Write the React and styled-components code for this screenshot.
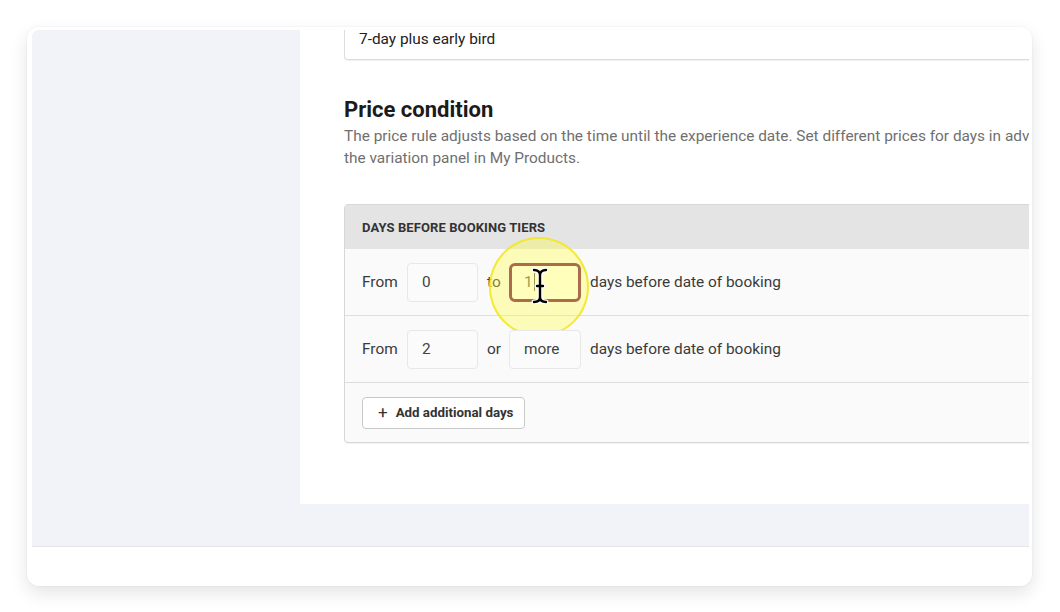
import React from "react";
import styled, { createGlobalStyle } from "styled-components";

const Global = createGlobalStyle`
  html, body { margin: 0; padding: 0; background: #ffffff; }
  body { font-family: Roboto, "Noto Sans", Arial, sans-serif; -webkit-font-smoothing: antialiased; }
  * { box-sizing: border-box; }
`;

const Page = styled.div`
  width: 1060px;
  height: 612px;
  padding: 27px 0 0 27px;
  overflow: hidden;
`;

const Card = styled.div`
  width: 1005px;
  height: 559px;
  background: #fff;
  border-radius: 12px;
  box-shadow: 0 0 0 1px rgba(0,0,0,0.02), 0 7px 18px rgba(0,0,0,0.11);
  padding: 3px 3px 0 5px;
  display: flex;
  flex-direction: column;
`;

const Screen = styled.div`
  height: 517px;
  display: flex;
  flex-direction: column;
  background: #f2f3f8;
  border-top-left-radius: 7px;
  border-bottom: 1px solid #e4e4e9;
  overflow: hidden;
`;

const MainRow = styled.div`
  height: 474px;
  display: flex;
`;

const Sidebar = styled.aside`
  width: 268px;
  flex: none;
  background: #f2f3f8;
`;

const Content = styled.main`
  flex: 1;
  background: #fff;
  overflow: hidden;
  padding-left: 44px;
`;

const Inner = styled.div`
  width: 820px;
  margin-top: -11px;
`;

const TextInput = styled.div`
  height: 41px;
  border: 1px solid #dcdcdc;
  border-top: none;
  border-radius: 0 0 4px 4px;
  box-shadow: 0 1px 1px rgba(0,0,0,0.06);
  padding-left: 14px;
  display: flex;
  align-items: center;
  font-size: 15.4px;
  color: #222;
`;

const Heading = styled.h2`
  margin: 36px 0 0;
  font-size: 22px;
  line-height: 28px;
  font-weight: 700;
  color: #1b1b1b;
`;

const Desc = styled.p`
  margin: 2px 0 0;
  font-size: 15.4px;
  line-height: 21.5px;
  color: #6f6f6f;
  white-space: nowrap;
`;

const Table = styled.div`
  margin-top: 35px;
  border: 1px solid #d7d7d7;
  border-radius: 4px;
  background: #fafafa;
  box-shadow: 0 1px 1px rgba(0,0,0,0.05);
`;

const TableHead = styled.div`
  height: 44px;
  background: #e4e4e4;
  padding-left: 17px;
  display: flex;
  align-items: center;
  font-size: 13px;
  font-weight: 700;
  letter-spacing: 0.1px;
  color: #333;
  text-transform: uppercase;
`;

const Row = styled.div`
  position: relative;
  height: 67px;
  padding-left: 17px;
  display: flex;
  align-items: center;
  gap: 9px;
  border-bottom: 1px solid #dedede;
  font-size: 15.4px;
  color: #3a3a3a;
`;

const Label = styled.span`
  width: ${(p) => p.$w || "auto"};
`;

const Box = styled.div`
  width: ${(p) => p.$w || 71}px;
  height: 39px;
  border: ${(p) => (p.$focus ? "3px solid #7e1d57" : "1px solid #e8e8e8")};
  border-radius: ${(p) => (p.$focus ? 6 : 4)}px;
  background: ${(p) => (p.$focus ? "#ffffff" : "#fbfbfb")};
  padding-left: ${(p) => (p.$focus ? 12 : 14)}px;
  display: flex;
  align-items: center;
  font-size: 15.4px;
  color: ${(p) => (p.$focus ? "#666" : "#444")};
`;

const Caret = styled.span`
  display: inline-block;
  width: 1px;
  height: 18px;
  background: #666;
  margin-left: 1px;
`;

const Footer = styled.div`
  height: 59px;
  padding-left: 17px;
  display: flex;
  align-items: center;
`;

const Button = styled.button`
  height: 32px;
  width: 163px;
  border: 1px solid #c9c9c9;
  border-radius: 4px;
  background: #fff;
  display: flex;
  align-items: center;
  gap: 8px;
  padding: 0 0 0 15px;
  font-family: inherit;
  font-size: 13.3px;
  font-weight: 700;
  color: #333;
`;

const Plus = styled.span`
  font-weight: 400;
  font-size: 17px;
  line-height: 1;
`;

const Highlight = styled.div`
  position: absolute;
  left: 144px;
  top: -12px;
  width: 100px;
  height: 100px;
  border-radius: 50%;
  background: rgba(255, 255, 60, 0.35);
  border: 2px solid rgba(240, 230, 30, 0.85);
  pointer-events: none;
`;

const Cursor = styled.svg`
  position: absolute;
  left: 186px;
  top: 18px;
  width: 18px;
  height: 38px;
  pointer-events: none;
`;

const Band = styled.div`
  height: 42px;
  background: #f2f3f8;
`;

const IBEAM =
  "M3 3 C7 3 9 5 9 8 L9 30 C9 33 7 35 3 35 M15 3 C11 3 9 5 9 8 M9 30 C9 33 11 35 15 35 M6 19 L12 19";

const IBeam = () => (
  <Cursor viewBox="0 0 18 38">
    <path d={IBEAM} fill="none" stroke="#fff" strokeWidth="5" strokeLinecap="round" />
    <path d={IBEAM} fill="none" stroke="#000" strokeWidth="2.4" strokeLinecap="round" />
  </Cursor>
);

export default function App() {
  return (
    <>
      <Global />
      <Page>
        <Card>
          <Screen>
            <MainRow>
              <Sidebar />
              <Content>
                <Inner>
                  <TextInput>7-day plus early bird</TextInput>
                  <Heading>Price condition</Heading>
                  <Desc>
                    The price rule adjusts based on the time until the experience date. Set different prices for days in advance in
                    <br />
                    the variation panel in My Products.
                  </Desc>
                  <Table>
                    <TableHead>Days before booking tiers</TableHead>
                    <Row>
                      <Label $w="36px">From</Label>
                      <Box>0</Box>
                      <Label $w="13px">to</Label>
                      <Box $focus $w={72}>
                        1<Caret />
                      </Box>
                      <Label>days before date of booking</Label>
                      <Highlight />
                      <IBeam />
                    </Row>
                    <Row>
                      <Label $w="36px">From</Label>
                      <Box>2</Box>
                      <Label $w="13px">or</Label>
                      <Box $w={72}>more</Box>
                      <Label>days before date of booking</Label>
                    </Row>
                    <Footer>
                      <Button>
                        <Plus>+</Plus>
                        Add additional days
                      </Button>
                    </Footer>
                  </Table>
                </Inner>
              </Content>
            </MainRow>
            <Band />
          </Screen>
        </Card>
      </Page>
    </>
  );
}
